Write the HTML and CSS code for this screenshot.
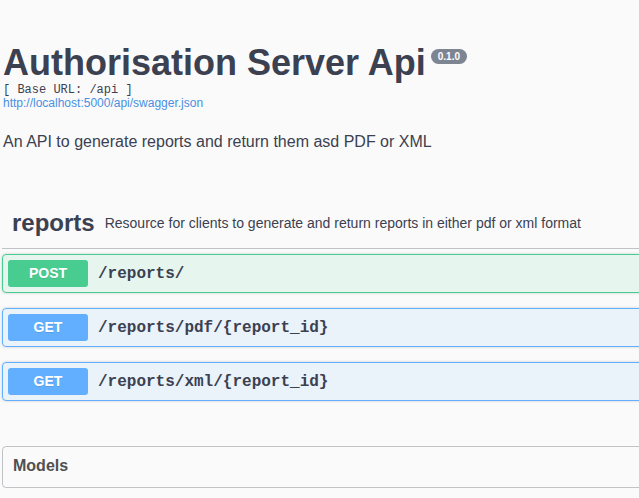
FILE: index.html
```html
<!DOCTYPE html>
<html lang="en">
<head>
<meta charset="utf-8">
<title>Authorisation Server Api</title>
<link rel="stylesheet" href="styles.css">
</head>
<body>
<div class="wrap">
  <div class="info">
    <div class="title-row">
      <h2 class="title">Authorisation Server Api</h2>
      <span class="version">0.1.0</span>
    </div>
    <pre class="base-url">[ Base URL: /api ]</pre>
    <a class="spec-link" href="#">http://localhost:5000/api/swagger.json</a>
    <p class="description">An API to generate reports and return them asd PDF or XML</p>
  </div>

  <section class="tag-section">
    <div class="tag">
      <h4 class="tag-name">reports</h4>
      <span class="tag-desc">Resource for clients to generate and return reports in either pdf or xml format</span>
    </div>

    <div class="opblock post">
      <div class="summary">
        <span class="method">POST</span>
        <span class="path">/reports/</span>
      </div>
    </div>
    <div class="opblock get">
      <div class="summary">
        <span class="method">GET</span>
        <span class="path">/reports/pdf/{report_id}</span>
      </div>
    </div>
    <div class="opblock get">
      <div class="summary">
        <span class="method">GET</span>
        <span class="path">/reports/xml/{report_id}</span>
      </div>
    </div>
  </section>

  <section class="models">
    <h4 class="models-title">Models</h4>
  </section>
</div>
</body>
</html>
```

FILE: styles.css
```css
html, body {
  margin: 0;
  padding: 0;
  overflow: hidden;
  background: #fafafa;
}

body {
  font-family: "Liberation Sans", Arial, sans-serif;
  color: #3b4151;
}

.wrap {
  width: 720px;
  padding: 43px 0 0 2px;
}

.info {
  padding-left: 1px;
}

.title-row {
  display: flex;
  align-items: flex-start;
}

.title {
  margin: 0;
  font-size: 36px;
  line-height: 40px;
  font-weight: 700;
  color: #3b4151;
}

.version {
  margin: 6px 0 0 5px;
  padding: 1px 7px;
  font-size: 10px;
  line-height: 13px;
  font-weight: 700;
  color: #fff;
  background: #7d8492;
  border-radius: 57px;
}

.base-url {
  margin: 1px 0 0;
  font-family: "Liberation Mono", "Courier New", monospace;
  font-size: 12px;
  line-height: 13px;
  color: #3b4151;
}

.spec-link {
  display: block;
  font-size: 12px;
  line-height: 13px;
  color: #4990e2;
  text-decoration: none;
}

.description {
  margin: 22px 0 0;
  font-size: 16px;
  line-height: 20px;
  color: #3b4151;
}

.tag-section {
  margin-top: 46px;
}

.tag {
  display: flex;
  align-items: center;
  padding: 10px 20px 10px 10px;
  border-bottom: 1px solid rgba(59, 65, 81, 0.3);
  margin-bottom: 5px;
}

.tag-name {
  margin: 0;
  font-size: 24px;
  line-height: 30px;
  font-weight: 700;
  color: #3b4151;
}

.tag-desc {
  margin-left: 10px;
  font-size: 14px;
  line-height: 20px;
  color: #3b4151;
}

.opblock {
  margin: 0 0 15px;
  border: 1px solid #000;
  border-radius: 4px;
  box-shadow: 0 0 3px rgba(0, 0, 0, 0.19);
}

.opblock.post {
  background: rgba(73, 204, 144, 0.1);
  border-color: #49cc90;
}

.opblock.get {
  background: rgba(97, 175, 254, 0.1);
  border-color: #61affe;
}

.summary {
  display: flex;
  align-items: center;
  padding: 5px;
}

.method {
  min-width: 80px;
  box-sizing: border-box;
  padding: 6px 15px;
  font-size: 14px;
  line-height: 15px;
  font-weight: 700;
  text-align: center;
  color: #fff;
  border-radius: 3px;
  text-shadow: 0 1px 0 rgba(0, 0, 0, 0.1);
}

.post .method {
  background: #49cc90;
}

.get .method {
  background: #61affe;
}

.path {
  padding: 0 10px;
  font-family: "Liberation Mono", "Courier New", monospace;
  font-size: 16px;
  font-weight: 700;
  color: #3b4151;
}

.models {
  margin-top: 45px;
  border: 1px solid rgba(59, 65, 81, 0.3);
  border-radius: 4px;
}

.models-title {
  margin: 0;
  padding: 9px 20px 11px 10px;
  font-size: 16px;
  line-height: 20px;
  font-weight: 700;
  color: #505050;
}
```
